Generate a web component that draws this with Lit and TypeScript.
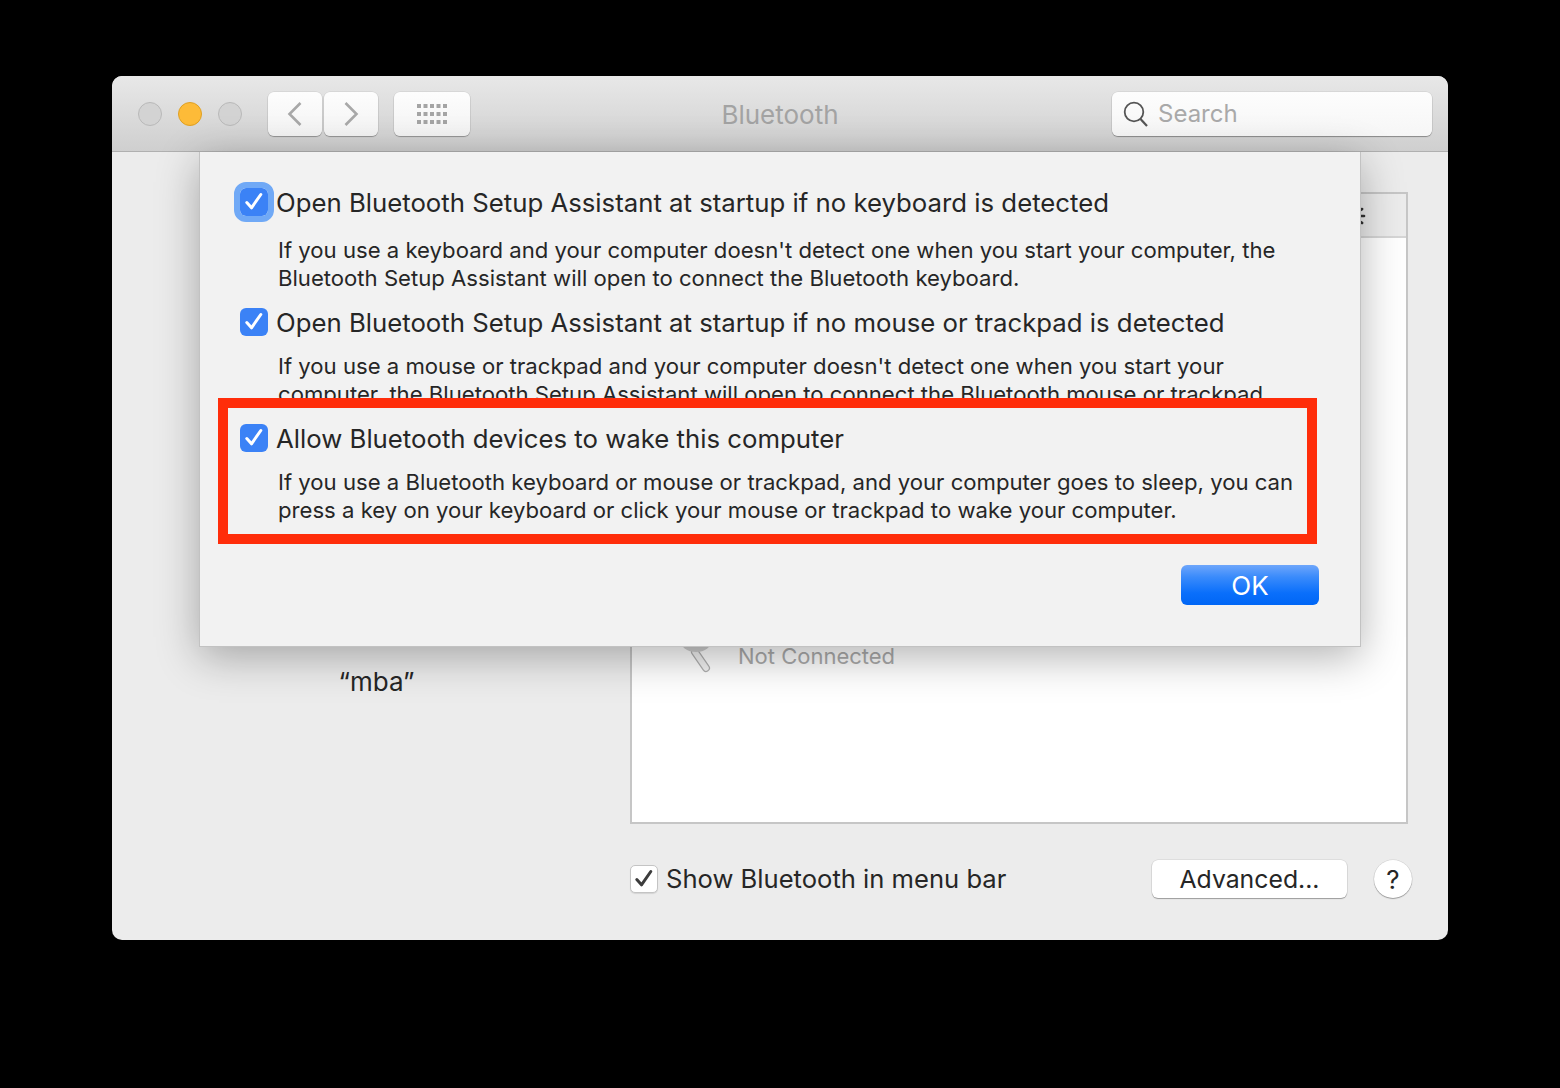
import { LitElement, html, css, svg } from "lit";
import { customElement } from "lit/decorators.js";

const check = (stroke: string) => html`<svg viewBox="0 0 28 28" width="28" height="28" aria-hidden="true"><path d="M6.8 14.5 L11.5 19.8 L20.8 6.5" fill="none" stroke=${stroke} stroke-width="3" stroke-linecap="round" stroke-linejoin="round"/></svg>`;

const dots = [0, 8, 16].flatMap((y) => [0, 6.5, 13, 19.5, 26].map((x) => svg`<rect x=${x} y=${y} width="4" height="4"/>`));
const rays = Array.from({ length: 12 }, (_, i) => svg`<line x1="22" y1="14" x2="28" y2="14" transform="rotate(${i * 30} 14 14)"/>`);

@customElement("app-root")
export class AppRoot extends LitElement {
  static styles = css`
    :host { display: block; height: 1088px; background: #000; padding: 76px 112px 0; box-sizing: border-box; font-family: Inter, "Liberation Sans", sans-serif; color: #262626; }
    .window { width: 1336px; height: 864px; border-radius: 10px; overflow: hidden; background: #ececec; display: flex; flex-direction: column; }
    .titlebar { height: 76px; box-sizing: border-box; flex: none; border-bottom: 1px solid #b0b0b0; background: linear-gradient(#e8e8e8, #cfcfcf); display: grid; grid-template-columns: 1fr auto 1fr; align-items: center; padding: 0 26px; }
    .tools { display: flex; align-items: center; }
    .lights { display: flex; gap: 16px; margin-right: 26px; }
    .light { width: 24px; height: 24px; box-sizing: border-box; border-radius: 50%; background: #d3d3d3; border: 1px solid #b9b9b9; }
    .light.yellow { background: #fdbb38; border-color: #dfa023; }
    .tool { height: 44px; box-sizing: border-box; border-radius: 6px; background: linear-gradient(#fdfdfd, #f3f3f3); box-shadow: 0 1px 1px rgba(0,0,0,.28), 0 0 0 .5px rgba(0,0,0,.1); display: flex; align-items: center; justify-content: center; }
    .nav { width: 54px; }
    .nav + .nav { margin-left: 2px; }
    .grid { width: 76px; margin-left: 16px; }
    .title { font-size: 26px; line-height: 30px; padding-top: 2px; color: #a3a3a3; }
    .right { display: flex; justify-content: flex-end; margin-right: -10px; }
    .search { width: 320px; height: 44px; box-sizing: border-box; border-radius: 6px; background: linear-gradient(#fdfdfd, #f6f6f6); box-shadow: 0 1px 1px rgba(0,0,0,.32), 0 0 0 .5px rgba(0,0,0,.1); display: flex; align-items: center; gap: 9px; padding-left: 11px; font-size: 24px; color: #a9a9a9; }
    .content { position: relative; flex: 1; display: grid; grid-template-columns: 518px 778px; padding: 40px 0 0 0; box-sizing: border-box; }
    .left { display: flex; flex-direction: column; align-items: center; width: 529px; padding-top: 474px; font-size: 26px; }
    .panel-wrap { display: flex; flex-direction: column; }
    .panel { width: 778px; height: 632px; box-sizing: border-box; border: 2px solid #c6c6c6; background: #fff; display: flex; flex-direction: column; }
    .panel-head { height: 44px; flex: none; box-sizing: border-box; background: #ececec; border-bottom: 2px solid #d6d6d6; display: flex; justify-content: flex-end; align-items: center; padding-right: 40px; padding-top: 2px; }
    .spin { stroke: #333; stroke-width: 2.6; stroke-linecap: round; }
    .devices { flex: 1; padding: 405px 0 0 30px; display: flex; gap: 26px; color: #ababab; font-size: 22px; align-items: flex-start; }
    .bottom { display: flex; align-items: center; height: 38px; margin-top: 36px; font-size: 25.6px; }
    .plain-box { width: 28px; height: 28px; box-sizing: border-box; border-radius: 5px; background: #fff; border: 1px solid #c4c4c4; box-shadow: 0 1px 1px rgba(0,0,0,.1); display: flex; align-items: center; justify-content: center; margin-right: 8px; }
    .plain-box svg { flex: none; }
    .label { flex: 1; padding-bottom: 2px; }
    .adv { width: 195px; height: 38px; flex: none; margin-left: 1px; font-size: 24.8px; border-radius: 6px; background: #fff; box-shadow: 0 1px 1px rgba(0,0,0,.3), 0 0 0 .5px rgba(0,0,0,.12); display: flex; align-items: center; justify-content: center; }
    .help { width: 38px; height: 38px; flex: none; border-radius: 50%; background: #fff; box-shadow: 0 1px 1px rgba(0,0,0,.3), 0 0 0 .5px rgba(0,0,0,.12); display: flex; align-items: center; justify-content: center; margin-left: 27px; margin-right: -4px; font-size: 26px; }

    .sheet { position: absolute; left: 87px; top: 0; width: 1162px; height: 495px; box-sizing: border-box; background: #f2f2f2; border: 1px solid #c2c2c2; border-top: none; box-shadow: 0 10px 40px rgba(0,0,0,.3); padding: 0 41px 0 40px; display: flex; flex-direction: column; }
    .sec { overflow: hidden; flex: none; margin-left: -10px; padding-left: 10px; box-sizing: border-box; }
    .sec1 { height: 156px; padding-top: 36px; }
    .sec2 { height: 92px; }
    .sec3 { height: 165px; padding-top: 24px; }
    .head { display: flex; align-items: center; height: 28px; font-size: 25.75px; gap: 8px; white-space: nowrap; }
    .box { width: 28px; height: 28px; flex: none; border-radius: 6px; background: #3b82f6; }
    .box.focus { outline: 6px solid #70a9f6; outline-offset: 0; }
    .desc { margin: 16px 0 0 38px; font-size: 22.13px; line-height: 28px; white-space: nowrap; }
    .sec1 .desc { margin-top: 20px; }
    .actions { display: flex; justify-content: flex-end; }
    .ok { width: 138px; height: 40px; border-radius: 6px; background: linear-gradient(#6ea6fb, #3a8bfb 30%, #0a6ffb 70%, #0066f5); color: #fff; font-size: 26px; display: flex; align-items: center; justify-content: center; }

    .callout { position: absolute; left: 106px; top: 246px; width: 1099px; height: 146px; box-sizing: border-box; border: 10px solid #ff2d0a; pointer-events: none; }
  `;

  render() {
    return html`
      <div class="window">
        <header class="titlebar">
          <div class="tools">
            <div class="lights"><span class="light"></span><span class="light yellow"></span><span class="light"></span></div>
            <div class="tool nav"><svg width="16" height="26" viewBox="0 0 16 26"><path d="M13.5 2 L2.5 13 L13.5 24" fill="none" stroke="#a8a8a8" stroke-width="2.6"/></svg></div>
            <div class="tool nav"><svg width="16" height="26" viewBox="0 0 16 26"><path d="M2.5 2 L13.5 13 L2.5 24" fill="none" stroke="#a8a8a8" stroke-width="2.6"/></svg></div>
            <div class="tool grid"><svg width="30" height="20" viewBox="0 0 30 20" fill="#a4a4a4">${dots}</svg></div>
          </div>
          <div class="title">Bluetooth</div>
          <div class="right">
            <div class="search"><svg width="26" height="28" viewBox="0 0 26 28"><circle cx="11" cy="12" r="9.3" fill="none" stroke="#555" stroke-width="1.8"/><path d="M17.5 19 L24 26" stroke="#555" stroke-width="2.2"/></svg>Search</div>
          </div>
        </header>
        <div class="content">
          <div class="left">“mba”</div>
          <div class="panel-wrap">
            <div class="panel">
              <div class="panel-head"><svg class="spin" width="30" height="28" viewBox="0 0 30 28" aria-hidden="true">${rays}</svg></div>
              <div class="devices">
                <svg width="50" height="30" viewBox="0 0 50 30" aria-hidden="true">
                  <path d="M33 9 L44 25" stroke="#b0b0b0" stroke-width="8" stroke-linecap="round"/>
                  <path d="M33 9 L44 25" stroke="#f2f2f2" stroke-width="5.5" stroke-linecap="round"/>
                  <ellipse cx="34" cy="-3" rx="16" ry="12" fill="#cfcfcf"/>
                </svg>
                <span>Not Connected</span>
              </div>
            </div>
            <div class="bottom">
              <span class="plain-box">${check("#3c3c3c")}</span>
              <span class="label">Show Bluetooth in menu bar</span>
              <span class="adv">Advanced...</span>
              <span class="help">?</span>
            </div>
          </div>
          <section class="sheet">
            <div class="sec sec1">
              <div class="head"><span class="box focus">${check("#fff")}</span>Open Bluetooth Setup Assistant at startup if no keyboard is detected</div>
              <p class="desc">If you use a keyboard and your computer doesn't detect one when you start your computer, the<br>Bluetooth Setup Assistant will open to connect the Bluetooth keyboard.</p>
            </div>
            <div class="sec sec2">
              <div class="head"><span class="box">${check("#fff")}</span>Open Bluetooth Setup Assistant at startup if no mouse or trackpad is detected</div>
              <p class="desc">If you use a mouse or trackpad and your computer doesn't detect one when you start your<br>computer, the Bluetooth Setup Assistant will open to connect the Bluetooth mouse or trackpad.</p>
            </div>
            <div class="sec sec3">
              <div class="head"><span class="box">${check("#fff")}</span>Allow Bluetooth devices to wake this computer</div>
              <p class="desc">If you use a Bluetooth keyboard or mouse or trackpad, and your computer goes to sleep, you can<br>press a key on your keyboard or click your mouse or trackpad to wake your computer.</p>
            </div>
            <div class="actions"><div class="ok">OK</div></div>
          </section>
          <div class="callout"></div>
        </div>
      </div>
    `;
  }
}
